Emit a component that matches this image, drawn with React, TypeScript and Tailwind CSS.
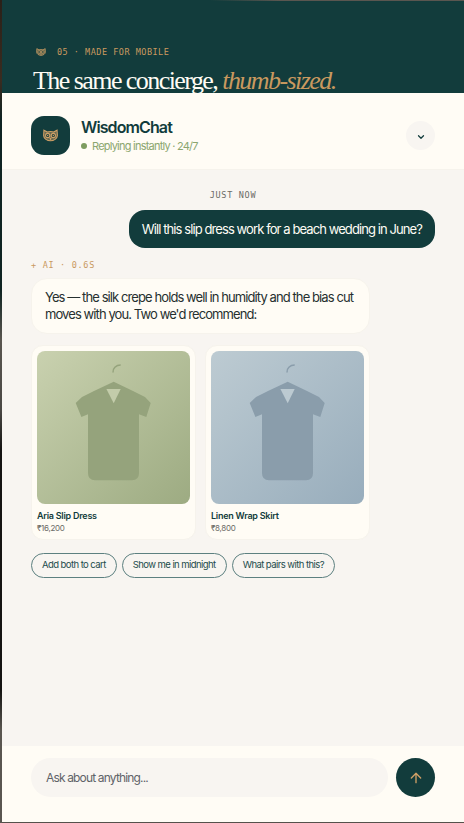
import { ArrowUp, ChevronDown } from "lucide-react";

const mono = "font-['DejaVu_Sans_Mono','Liberation_Mono',monospace] text-[8.5px] leading-[12px]";

const Owl = ({ className }: { className: string }) => (
  <svg viewBox="0 0 24 20" fill="none" stroke="#d0a066" strokeWidth="1.7" className={className}>
    <path d="M1.500 1.500l5.500 3c3-1 7-1 10 0l5.500-3 .5 8.500c0 5-6 8.500-11 8.500S1 15 1 10z" fill="#d0a066" fillOpacity="0.45" />
    <circle cx="7.500" cy="10" r="3.400" fill="#123c3c" />
    <circle cx="16.500" cy="10" r="3.400" fill="#123c3c" />
    <circle cx="7.500" cy="10" r="1.100" fill="#d0a066" stroke="none" />
    <circle cx="16.500" cy="10" r="1.100" fill="#d0a066" stroke="none" />
    <path d="M11 14l1 2 1-2" />
  </svg>
);

const Shirt = ({ body, light }: { body: string; light: string }) => (
  <svg viewBox="0 0 153 153" className="h-full w-full">
    <path d="M76 21.500c-.5-4 3-7.500 7.700-7.500" fill="none" stroke={body} strokeWidth="1.500" />
    <path d="M76.700 30.700L96 40L108 46L113.700 52L109.300 66L102 63.300V122Q102 129.300 95 129.300H58Q51 129.300 51 122V63.300L44.400 66L38.700 52L45 46L57 40Z" fill={body} />
    <path d="M69.400 38H83.700L76.700 52.300Z" fill={light} />
  </svg>
);

const products = [
  { name: "Aria Slip Dress", price: "₹16,200", tile: "bg-gradient-to-br from-[#c9d1af] to-[#9dab82]", body: "#95a37c", light: "#c3ccaa" },
  { name: "Linen Wrap Skirt", price: "₹8,800", tile: "bg-gradient-to-br from-[#bdcbd2] to-[#98adbc]", body: "#8a9dab", light: "#bccad1" },
];

const chips = ["Add both to cart", "Show me in midnight", "What pairs with this?"];

export default function App() {
  return (
    <div className="flex h-[823px] w-[464px] overflow-hidden bg-[#151412] font-['Inter',sans-serif]">
      <div className="h-full w-[2px] shrink-0 bg-[linear-gradient(to_bottom,#2a2018_0px,#3a2c20_80px,#0f2322_120px,#0f2322_290px,#5a5650_340px,#4a4844_410px,#151412_450px,#151412_690px,#5a5650_730px,#5a5650_823px)]" />
      <div className="flex min-w-0 flex-1 flex-col">
        <div className="h-px shrink-0 bg-[linear-gradient(to_right,#123c3c_0%,#123c3c_45%,#5a5650_60%,#5a5650_100%)]" />
        <div className="h-[92px] shrink-0 overflow-hidden bg-[#123c3c] pl-[31px] pt-[45px]">
          <div className="ml-[3px] flex items-center gap-[11px]">
            <Owl className="h-[8px] w-[10px]" />
            <span className={`${mono} tracking-[0.5px] text-[#c9995f]`}>05 · MADE FOR MOBILE</span>
          </div>
          <h1 className="mt-[6px] whitespace-nowrap font-['Liberation_Serif',serif] text-[26px] leading-[34px] tracking-[-0.06em] text-[#fffcf5]">
            The same concierge, <em className="text-[#c9995f]">thumb-sized.</em>
          </h1>
        </div>

        <div className="flex min-h-0 flex-1 flex-col bg-[#f8f5f1]">
          <div className="flex h-[77px] shrink-0 items-center border-b border-[#f6f3ec] bg-[#fffcf5] px-[29px] pt-[8px]">
            <div className="flex h-[39px] w-[39px] items-center justify-center rounded-[13px] bg-[#123c3c]">
              <Owl className="h-[13px] w-[15px]" />
            </div>
            <div className="ml-[11px] flex-1">
              <div className="text-base font-semibold leading-[20px] tracking-[-0.056em] text-[#123c3c]">WisdomChat</div>
              <div className="mt-[1px] flex items-center gap-[5px] text-[11px] leading-[16px] tracking-[-0.07em] text-[#8ba66f]">
                <span className="h-[6px] w-[6px] rounded-full bg-[#7d9c5f]" />
                Replying instantly · 24/7
              </div>
            </div>
            <div className="flex h-[29px] w-[29px] items-center justify-center rounded-full bg-[#f8f5f1]">
              <ChevronDown className="mt-[4px] h-[10px] w-[10px] text-[#123c3c]" strokeWidth={3} />
            </div>
          </div>

          <div className="flex flex-1 flex-col px-[29px] pt-[19px]">
            <div className={`${mono} text-center tracking-[0.7px] text-[#6b6b66]`}>JUST NOW</div>
            <div className="mt-[9px] self-end rounded-[16px] bg-[#123c3c] px-[13px] py-[9px] text-[13px] leading-[20px] tracking-[-0.07em] text-[#fffcf5]">
              Will this slip dress work for a beach wedding in June?
            </div>
            <div className={`${mono} mt-[11px] tracking-[0.7px] text-[#c9995f]`}>+ AI · 0.6S</div>
            <div className="mt-[7px] w-[339px] rounded-[16px] border border-[#f6f3ec] bg-[#fffcf5] px-[13px] py-[9.500px] text-[13px] leading-[17.300px] tracking-[-0.07em] text-[#26302f]">
              Yes — the silk crepe holds well in humidity and the bias cut moves with you. Two we'd recommend:
            </div>

            <div className="mt-[11px] flex gap-[9px]">
              {products.map((p) => (
                <div key={p.name} className="w-[165px] rounded-[12px] border border-[#f6f3ec] bg-[#fffcf5] p-[5px]">
                  <div className={`h-[153px] w-full rounded-[8px] ${p.tile}`}>
                    <Shirt body={p.body} light={p.light} />
                  </div>
                  <div className="mt-[5px] text-[9px] font-semibold leading-[14px] tracking-[-0.25px] text-[#123c3c]">{p.name}</div>
                  <div className="-mt-[1px] text-[8px] leading-[12px] tracking-[-0.3px] text-[#6b6b66]">{p.price}</div>
                </div>
              ))}
            </div>

            <div className="mt-[13px] flex gap-[5px]">
              {chips.map((c) => (
                <div key={c} className="flex h-[25px] items-center rounded-full border border-[#5c8080] px-[10px] text-[9.500px] tracking-[-0.06em] text-[#234c4c]">
                  {c}
                </div>
              ))}
            </div>
          </div>

          <div className="flex h-[76px] shrink-0 items-start gap-[8px] bg-[#fffcf5] px-[29px] pt-[12px]">
            <div className="flex h-[39px] flex-1 items-center rounded-full bg-[#f8f5f1] px-[15px] text-[12px] tracking-[-0.07em] text-[#5f6368]">
              Ask about anything...
            </div>
            <div className="flex h-[39px] w-[39px] items-center justify-center rounded-full bg-[#123c3c]">
              <ArrowUp className="h-[16px] w-[16px] text-[#d0a066]" strokeWidth={2} />
            </div>
          </div>
        </div>
        <div className="h-px shrink-0 bg-[#55514b]" />
      </div>
    </div>
  );
}
